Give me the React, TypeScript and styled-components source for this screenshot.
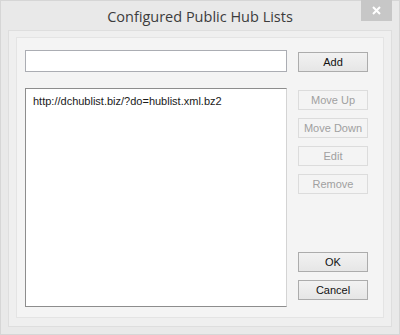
import styled, { createGlobalStyle } from "styled-components";

const GlobalStyle = createGlobalStyle`
  html, body {
    margin: 0;
    padding: 0;
    background: #e9e9e9;
  }
  body {
    font-family: "Liberation Sans", Arial, sans-serif;
  }
`;

const Window = styled.div`
  width: 400px;
  height: 335px;
  box-sizing: border-box;
  background: #e9e9e9;
  border: 1px solid #d6d6d6;
  display: flex;
  flex-direction: column;
  padding: 0 7px 7px;
`;

const TitleBar = styled.div`
  height: 29px;
  display: flex;
  align-items: center;
  justify-content: center;
  position: relative;
`;

const Title = styled.span`
  font-family: "Open Sans", "Noto Sans", sans-serif;
  font-size: 14.5px;
  color: #3c3c3c;
  margin-top: 2px;
`;

const CloseButton = styled.div`
  position: absolute;
  top: -1px;
  right: 0;
  width: 31px;
  height: 21px;
  background: #c7c7c7;
  display: flex;
  align-items: center;
  justify-content: center;
`;

const Client = styled.div`
  flex: 1;
  background: #efefef;
  border: 1px solid #dedede;
  padding: 6px 7px 8px;
  display: flex;
`;

const Panel = styled.div`
  flex: 1;
  background: #f4f4f4;
  border: 1px solid #e4e4e4;
  display: grid;
  grid-template-columns: 262px 70px;
  grid-template-rows: 22px 1fr;
  column-gap: 11px;
  row-gap: 16px;
  padding: 12px 0 10px 8px;
`;

const TextBox = styled.div`
  box-sizing: border-box;
  background: #fff;
  border: 1px solid #abadb3;
`;

const ListBox = styled.div`
  box-sizing: border-box;
  background: #fff;
  border: 1px solid #8d8d8d;
  border-right-color: #d4d4d4;
  padding: 4px 7px;
`;

const ListItem = styled.div`
  font-size: 11px;
  color: #1a1a1a;
  line-height: 16px;
`;

const ButtonColumn = styled.div`
  display: flex;
  flex-direction: column;
  gap: 8px;
  padding: 2px 0 7px;
`;

const Button = styled.div<{ $disabled?: boolean }>`
  box-sizing: border-box;
  height: 20px;
  display: flex;
  align-items: center;
  justify-content: center;
  font-size: 11px;
  border: 1px solid ${(p) => (p.$disabled ? "#dcdcdc" : "#acacac")};
  background: ${(p) =>
    p.$disabled ? "#f4f4f4" : "linear-gradient(#f2f2f2, #e6e6e6)"};
  color: ${(p) => (p.$disabled ? "#a0a0a0" : "#111")};
`;

const AddButton = styled(Button)`
  align-self: end;
`;

const Spacer = styled.div`
  flex: 1;
`;

export default function App() {
  return (
    <>
      <GlobalStyle />
      <Window>
        <TitleBar>
          <Title>Configured Public Hub Lists</Title>
          <CloseButton>
            <svg width="9" height="9" viewBox="0 0 9 9">
              <path d="M1 1L8 8M8 1L1 8" stroke="#fff" strokeWidth="2" />
            </svg>
          </CloseButton>
        </TitleBar>
        <Client>
          <Panel>
            <TextBox />
            <AddButton>Add</AddButton>
            <ListBox>
              <ListItem>http://dchublist.biz/?do=hublist.xml.bz2</ListItem>
            </ListBox>
            <ButtonColumn>
              <Button $disabled>Move Up</Button>
              <Button $disabled>Move Down</Button>
              <Button $disabled>Edit</Button>
              <Button $disabled>Remove</Button>
              <Spacer />
              <Button>OK</Button>
              <Button>Cancel</Button>
            </ButtonColumn>
          </Panel>
        </Client>
      </Window>
    </>
  );
}
